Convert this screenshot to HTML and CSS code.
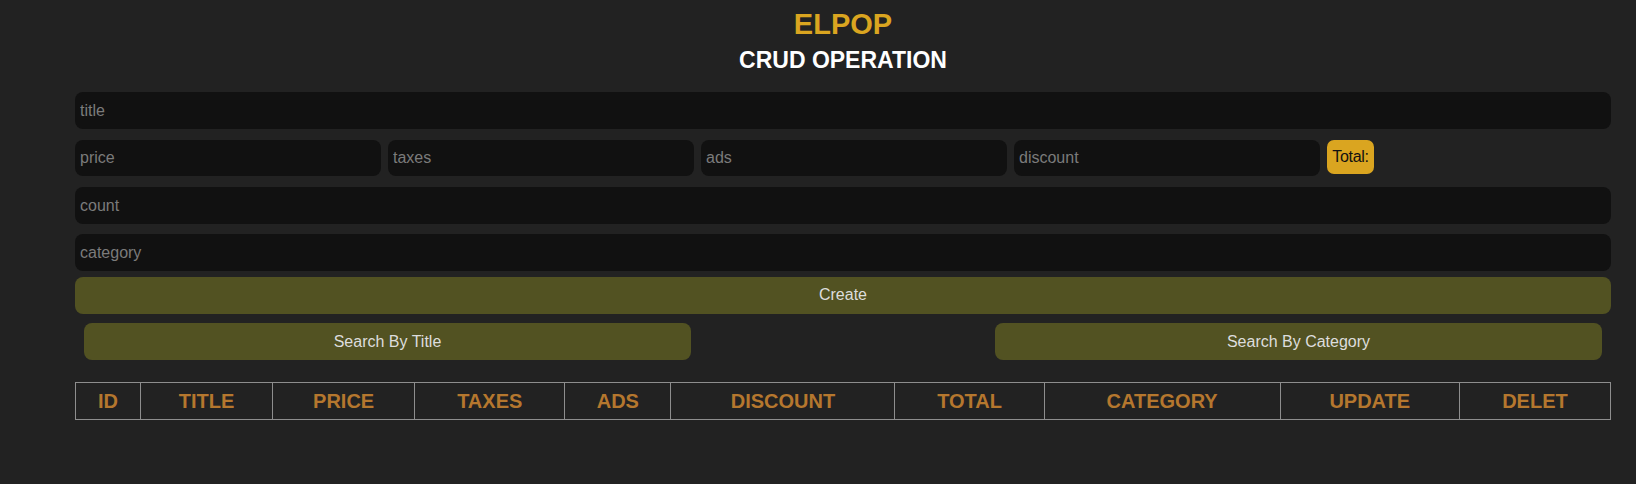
FILE: index.html
```html
<!DOCTYPE html>
<html>
<head>
<meta charset="utf-8">
<title>CRUD</title>
<link rel="stylesheet" href="styles.css">
</head>
<body>
<div class="page">
  <header class="head">
    <h1 class="brand">ELPOP</h1>
    <h2 class="subtitle">CRUD OPERATION</h2>
  </header>
  <div class="inputs">
    <input class="field title-field" type="text" placeholder="title">
    <div class="price-row">
      <input class="field small" type="number" placeholder="price">
      <input class="field small" type="number" placeholder="taxes">
      <input class="field small" type="number" placeholder="ads">
      <input class="field small" type="number" placeholder="discount">
      <small class="total">Total:</small>
    </div>
    <input class="field count-field" type="number" placeholder="count">
    <input class="field category-field" type="text" placeholder="category">
    <button class="btn create">Create</button>
  </div>
  <div class="search-row">
    <button class="btn search">Search By Title</button>
    <button class="btn search">Search By Category</button>
  </div>
  <table class="grid">
    <colgroup>
      <col class="c-id"><col class="c-title"><col class="c-price"><col class="c-taxes"><col class="c-ads">
      <col class="c-discount"><col class="c-total"><col class="c-category"><col class="c-update"><col class="c-delete">
    </colgroup>
    <thead>
      <tr>
        <th>ID</th><th>title</th><th>price</th><th>taxes</th><th>ads</th>
        <th>discount</th><th>total</th><th>category</th><th>update</th><th>delet</th>
      </tr>
    </thead>
  </table>
</div>
</body>
</html>
```
FILE: styles.css
```css
* { box-sizing: border-box; }
html, body { margin: 0; padding: 0; }
body {
  background: #222222;
  font-family: "Liberation Sans", Arial, sans-serif;
  color: #dddddd;
  height: 484px;
  overflow: hidden;
}
.page {
  margin: 0 25px 0 75px;
}
.head {
  text-align: center;
  padding-top: 7px;
}
.brand {
  margin: 0;
  font-size: 29px;
  line-height: 34px;
  font-weight: bold;
  color: #daa520;
}
.subtitle {
  margin: 6px 0 0;
  font-size: 23px;
  line-height: 27px;
  font-weight: bold;
  color: #ffffff;
}
.inputs {
  display: flex;
  flex-direction: column;
  margin-top: 18px;
}
.field {
  display: block;
  width: 100%;
  height: 37px;
  border: none;
  outline: none;
  border-radius: 8px;
  background: #111111;
  color: #dddddd;
  padding: 0 5px;
  font-family: "Liberation Sans", Arial, sans-serif;
  font-size: 16px;
}
.field::placeholder { color: #7b7b7b; }
.price-row {
  display: flex;
  align-items: flex-start;
  gap: 7px;
  margin-top: 11px;
  height: 36px;
}
.field.small {
  width: 306px;
  flex: 0 0 306px;
  height: 36px;
}
.total {
  display: flex;
  align-items: center;
  justify-content: center;
  width: 47px;
  height: 34px;
  background: #daa520;
  color: #111111;
  border-radius: 7px;
  font-size: 16px;
  letter-spacing: -0.3px;
}
.count-field { margin-top: 11px; }
.category-field { margin-top: 10px; }
.btn {
  display: block;
  height: 37px;
  border: none;
  border-radius: 8px;
  background: #525222;
  color: #dddddd;
  font-family: "Liberation Sans", Arial, sans-serif;
  font-size: 16px;
  cursor: pointer;
}
.create {
  width: 100%;
  margin-top: 6px;
  padding-bottom: 2px;
}
.search-row {
  display: flex;
  justify-content: space-between;
  padding: 0 9px;
  margin-top: 9px;
}
.search { width: 607px; }
.grid {
  width: 100%;
  margin-top: 22px;
  border-collapse: collapse;
  table-layout: fixed;
}
.grid th {
  height: 37px;
  border: 1px solid #8e8e8e;
  color: #b5772e;
  font-size: 20px;
  font-weight: bold;
  text-transform: uppercase;
  padding: 0;
  text-align: center;
}
.c-id { width: 65px; }
.c-title { width: 132px; }
.c-price { width: 142px; }
.c-taxes { width: 150px; }
.c-ads { width: 106px; }
.c-discount { width: 224px; }
.c-total { width: 149px; }
.c-category { width: 236px; }
.c-update { width: 179px; }
.c-delete { width: 151px; }
```
